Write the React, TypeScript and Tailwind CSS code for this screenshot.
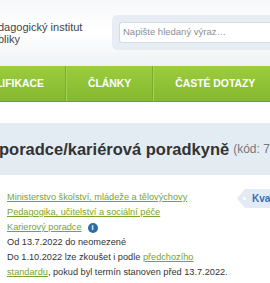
const font = "font-['Liberation_Sans',Arial,sans-serif]";

function Header() {
  return (
    <div className="flex h-[66px] items-start bg-gradient-to-b from-[#f7f8fa] via-white to-[#eef2f5]">
      <div className="w-[112px] shrink-0 pt-[21px] text-[11px] leading-[12px] text-[#444]">
        <div className="ml-[-2px] whitespace-nowrap">dagogický institut</div>
        <div className="ml-[-2px] whitespace-nowrap">bliky</div>
      </div>
      <div className="mt-[15px] flex h-[35px] flex-1 items-center rounded-l-[5px] bg-[#e7edf3] pl-[7px]">
        <div className="flex h-[21px] flex-1 items-center rounded-l-[3px] border border-r-0 border-[#d3dbe3] bg-white pl-[3px] text-[9.5px] text-[#8a8f95] whitespace-nowrap">
          Napište hledaný výraz…
        </div>
      </div>
    </div>
  );
}

function NavDivider() {
  return (
    <div className="flex h-full shrink-0">
      <div className="w-px bg-[#7eab2c]" />
      <div className="w-px bg-[#a7d25a]" />
    </div>
  );
}

function Nav() {
  const item = 'flex h-full items-center px-[21px] whitespace-nowrap';
  return (
    <div className="flex h-[36px] items-center overflow-hidden border-b border-[#72a223] bg-gradient-to-b from-[#9ccc3f] to-[#85b92d] text-[10.4px] font-bold text-white">
      <div className="ml-[-4px] flex h-full items-center pr-[21px] whitespace-nowrap">LIFIKACE</div>
      <NavDivider />
      <div className={item}>ČLÁNKY</div>
      <NavDivider />
      <div className={item}>ČASTÉ DOTAZY</div>
    </div>
  );
}

function Tag() {
  return (
    <div className="mt-[-1px] flex h-[19px] shrink-0 items-center bg-[#e2eaf3] pl-[6px] [clip-path:polygon(8px_0,100%_0,100%_100%,8px_100%,0_50%)]">
      <div className="h-[3px] w-[3px] rounded-full bg-white" />
      <span className="ml-[6px] whitespace-nowrap text-[10px] font-bold text-[#3b6fb2]">Kvalifikace</span>
    </div>
  );
}

export default function App() {
  const link = 'text-[#78a52a] underline';
  return (
    <div className={`h-[283px] w-[270px] overflow-hidden bg-white ${font}`}>
      <Header />
      <Nav />
      <div className="mt-[21px] flex h-[52px] items-center overflow-hidden bg-[#e4ecf3] whitespace-nowrap">
        <span className="ml-[-1px] text-[16.5px] font-bold text-[#333]">poradce/kariérová poradkyně</span>
        <span className="ml-[4px] text-[12px] text-[#777]">(kód: 75-001-T)</span>
      </div>
      <div className="mt-[15px] flex">
        <div className="w-[237px] shrink-0 pl-[7px] text-[9.2px] leading-[15px] text-[#333]">
          <div className="whitespace-nowrap">
            <a className={link}>Ministerstvo školství, mládeže a tělovýchovy</a>
          </div>
          <div className="whitespace-nowrap">
            <a className={link}>Pedagogika, učitelství a sociální péče</a>
          </div>
          <div className="flex items-center whitespace-nowrap">
            <a className={link}>Karierový poradce</a>
            <span className="ml-[6px] flex h-[10px] w-[10px] items-center justify-center rounded-full bg-[#2f6aa9] text-[7.5px] font-bold leading-none text-white">
              i
            </span>
          </div>
          <div className="whitespace-nowrap">Od 13.7.2022 do neomezené</div>
          <div className="whitespace-nowrap">
            Do 1.10.2022 lze zkoušet i podle <a className={link}>předchozího</a>
          </div>
          <div className="whitespace-nowrap">
            <a className={link}>standardu</a>, pokud byl termín stanoven před 13.7.2022.
          </div>
        </div>
        <Tag />
      </div>
    </div>
  );
}
